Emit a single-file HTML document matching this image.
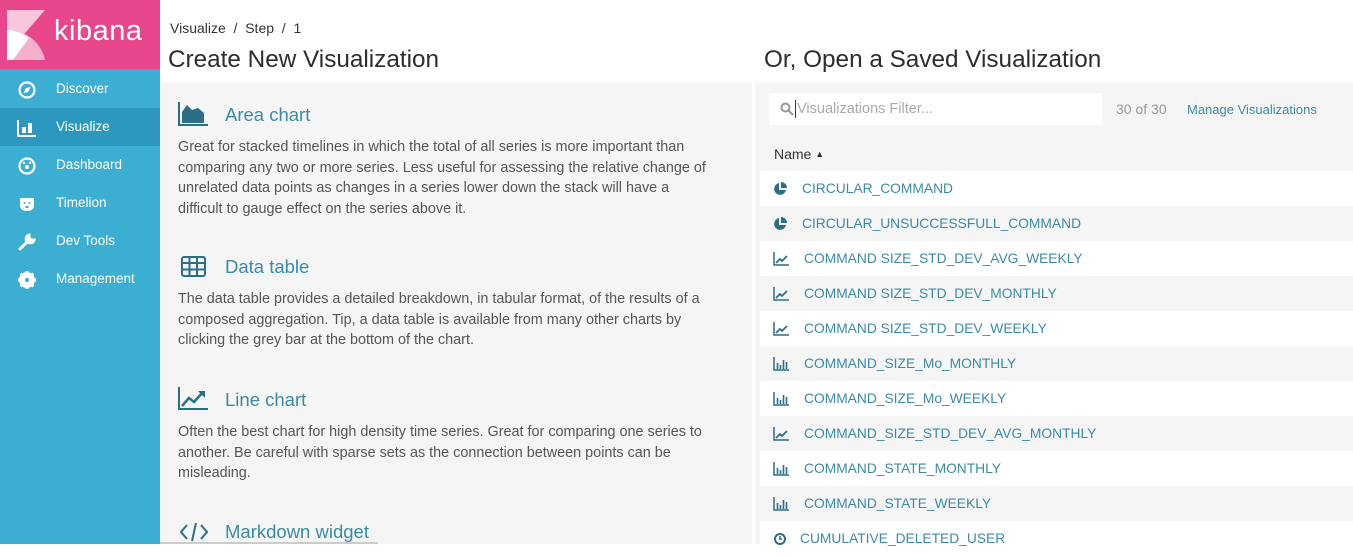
<!DOCTYPE html>
<html><head><meta charset="utf-8"><style>
*{margin:0;padding:0;box-sizing:border-box}
body{width:1353px;height:544px;overflow:hidden;background:#fff;font-family:"Liberation Sans",sans-serif;position:relative;color:#444}
#side{position:absolute;left:0;top:0;width:160px;height:544px;background:#3caed2}
#logo{height:69px;background:#e8488b;position:relative}
#logo .t{position:absolute;left:54px;top:15px;color:#fff;font-size:29px;letter-spacing:0.5px}
.nav{position:absolute;left:0;width:160px;height:38px;color:#fff;font-size:13.5px;line-height:38px;padding-left:56px}
.nav.sel{background:#2d98bf}
.nav svg{position:absolute;left:17px;top:10px}
.crumb{position:absolute;left:170px;top:20px;font-size:14px;color:#333}
h1{position:absolute;font-weight:normal;font-size:24.3px;color:#2d2d2d;top:46px}
#lp{position:absolute;left:160px;top:82px;width:592px;height:462px;background:#f5f5f5}
#rp{position:absolute;left:755px;top:82px;width:598px;height:462px;background:#f5f5f5}
.vt{position:absolute;left:65px;font-size:18.5px;color:#3a8ba8}
.vi{position:absolute;left:18px}
.ds{position:absolute;left:18px;width:550px;font-size:14.4px;line-height:20.5px;color:#555}
.row{position:absolute;left:5px;width:593px;height:35px;font-size:13.8px;color:#3a8ba8;line-height:35px}
.row.w{background:#fff}
.row svg{position:absolute;left:13px;top:11px}
.row span{position:absolute;left:44px}
</style></head><body>
<div id="side">
 <div id="logo">
  <svg width="38" height="50" style="position:absolute;left:7px;top:10px" viewBox="0 0 38 50">
   <polygon points="0,0 38,0 0,44" fill="#f9c6dc"/>
   <path d="M0,20 A38,38 0 0 1 38,50 L0,50 Z" fill="#f6b0cd"/>
   <path d="M0,20 A38,38 0 0 1 22,28 L6,50 L0,50 Z" fill="#fff"/>
  </svg>
  <div class="t">kibana</div>
 </div>
 <div class="nav" style="top:70px"><svg width="20" height="20" viewBox="0 0 20 20"><circle cx="10" cy="10" r="7.5" fill="none" stroke="#fff" stroke-width="2.2"/><polygon points="13.5,6.5 11.5,11.5 8.5,8.5" fill="#fff"/><polygon points="6.5,13.5 8.5,8.5 11.5,11.5" fill="#fff"/></svg>Discover</div>
 <div class="nav sel" style="top:108px"><svg width="20" height="20" viewBox="0 0 20 20"><path d="M1,2V18H19" fill="none" stroke="#fff" stroke-width="2"/><rect x="5" y="9" width="4" height="6" fill="#fff"/><rect x="11" y="5" width="4" height="10" fill="#fff"/></svg>Visualize</div>
 <div class="nav" style="top:146px"><svg width="20" height="20" viewBox="0 0 20 20"><circle cx="10" cy="10" r="7.5" fill="none" stroke="#fff" stroke-width="2.2"/><circle cx="10" cy="11" r="2" fill="#fff"/><circle cx="7" cy="7" r="1.2" fill="#fff"/><circle cx="13" cy="7" r="1.2" fill="#fff"/></svg>Dashboard</div>
 <div class="nav" style="top:184px"><svg width="20" height="20" viewBox="0 0 20 20"><path d="M3,4H17V11Q17,17 10,17Q3,17 3,11Z" fill="#fff"/><circle cx="7.5" cy="9" r="1" fill="#3caed2"/><circle cx="12.5" cy="9" r="1" fill="#3caed2"/><rect x="8.5" y="12" width="3" height="2" fill="#3caed2"/></svg>Timelion</div>
 <div class="nav" style="top:222px"><svg width="20" height="20" viewBox="0 0 20 20"><path d="M3,17L11,9M12,3A4,4 0 1 0 17,8L14,8L12,6Z" fill="#fff" stroke="#fff" stroke-width="3" stroke-linecap="round"/></svg>Dev Tools</div>
 <div class="nav" style="top:260px"><svg width="20" height="20" viewBox="0 0 20 20"><circle cx="10" cy="10" r="6" fill="none" stroke="#fff" stroke-width="4"/><path d="M10,1V19M1,10H19M3.6,3.6L16.4,16.4M16.4,3.6L3.6,16.4" stroke="#fff" stroke-width="3"/><circle cx="10" cy="10" r="2" fill="#3caed2"/></svg>Management</div>
</div>
<div class="crumb">Visualize&nbsp; / &nbsp;Step&nbsp; / &nbsp;1</div>
<h1 style="left:168px">Create New Visualization</h1>
<h1 style="left:764px">Or, Open a Saved Visualization</h1>
<div id="lp">
 <svg class="vi" style="top:20px" width="30" height="25" viewBox="0 0 30 25"><path d="M1,0V23H30" fill="none" stroke="#2a6f86" stroke-width="2"/><path d="M4,21V10L9,3L14,8L20,6L26,11V21Z" fill="#2a6f86"/></svg>
 <div class="vt" style="top:22px">Area chart</div>
 <div class="ds" style="top:55px;width:535px">Great for stacked timelines in which the total of all series is more important than comparing any two or more series. Less useful for assessing the relative change of unrelated data points as changes in a series lower down the stack will have a difficult to gauge effect on the series above it.</div>
 <svg class="vi" style="top:174px;left:21px" width="25" height="21" viewBox="0 0 25 21"><rect x="1" y="1" width="23" height="19" rx="2" fill="none" stroke="#2a6f86" stroke-width="2"/><path d="M1,7H24M1,13.5H24M8.5,1V20M16,1V20" stroke="#2a6f86" stroke-width="2"/></svg>
 <div class="vt" style="top:174px">Data table</div>
 <div class="ds" style="top:207px">The data table provides a detailed breakdown, in tabular format, of the results of a composed aggregation. Tip, a data table is available from many other charts by clicking the grey bar at the bottom of the chart.</div>
 <svg class="vi" style="top:305px" width="30" height="24" viewBox="0 0 30 24"><path d="M1,0V22H30" fill="none" stroke="#2a6f86" stroke-width="2"/><path d="M4,19L11,11L16,15L25,5" fill="none" stroke="#2a6f86" stroke-width="2.5"/><path d="M20,4H27V11Z" fill="#2a6f86"/></svg>
 <div class="vt" style="top:307px">Line chart</div>
 <div class="ds" style="top:340px">Often the best chart for high density time series. Great for comparing one series to another. Be careful with sparse sets as the connection between points can be misleading.</div>
 <svg class="vi" style="top:440px;left:20px" width="28" height="20" viewBox="0 0 28 20"><path d="M7,3L1,10L7,17M21,3L27,10L21,17M16,1L12,19" fill="none" stroke="#2a6f86" stroke-width="2"/></svg>
 <div class="vt" style="top:439px">Markdown widget</div>
</div>
<div id="rp">
 <div style="position:absolute;left:14px;top:11px;width:333px;height:32px;background:#fff;border-radius:3px">
  <svg style="position:absolute;left:11px;top:9px" width="14" height="14" viewBox="0 0 14 14"><circle cx="5.5" cy="5.5" r="4" fill="none" stroke="#999" stroke-width="2"/><path d="M8.5,8.5L13,13" stroke="#999" stroke-width="2.2"/></svg>
  <div style="position:absolute;left:26px;top:7px;width:1px;height:18px;background:#333"></div>
  <div style="position:absolute;left:28px;top:8px;font-size:14.5px;color:#aaa">Visualizations Filter...</div>
 </div>
 <div style="position:absolute;left:361px;top:19px;font-size:14px;color:#999">30 of 30</div>
 <div style="position:absolute;left:432px;top:20px;font-size:13px;color:#3a8ba8">Manage Visualizations</div>
 <div style="position:absolute;left:19px;top:64px;font-size:14px;color:#333">Name <span style="font-size:9px;vertical-align:2px">&#9650;</span></div>
</div>
<div style="position:absolute;left:755px;top:0;width:598px;height:544px">
 <div class="row w" style="top:171px"><svg width="14" height="14" viewBox="0 0 14 14"><path d="M6,1A6,6 0 1 0 13,8H6Z" fill="#2a6f86"/><path d="M8,0A6,6 0 0 1 14,6H8Z" fill="#2a6f86"/></svg><span style="left:42px">CIRCULAR_COMMAND</span></div>
 <div class="row" style="top:206px"><svg width="14" height="14" viewBox="0 0 14 14"><path d="M6,1A6,6 0 1 0 13,8H6Z" fill="#2a6f86"/><path d="M8,0A6,6 0 0 1 14,6H8Z" fill="#2a6f86"/></svg><span style="left:42px">CIRCULAR_UNSUCCESSFULL_COMMAND</span></div>
 <div class="row w" style="top:241px"><svg width="16" height="14" viewBox="0 0 16 14"><path d="M1,0V13H16" fill="none" stroke="#2a6f86" stroke-width="1.5"/><path d="M3,11L7,7L9,9L14,4" fill="none" stroke="#2a6f86" stroke-width="1.8"/></svg><span>COMMAND SIZE_STD_DEV_AVG_WEEKLY</span></div>
 <div class="row" style="top:276px"><svg width="16" height="14" viewBox="0 0 16 14"><path d="M1,0V13H16" fill="none" stroke="#2a6f86" stroke-width="1.5"/><path d="M3,11L7,7L9,9L14,4" fill="none" stroke="#2a6f86" stroke-width="1.8"/></svg><span>COMMAND SIZE_STD_DEV_MONTHLY</span></div>
 <div class="row w" style="top:311px"><svg width="16" height="14" viewBox="0 0 16 14"><path d="M1,0V13H16" fill="none" stroke="#2a6f86" stroke-width="1.5"/><path d="M3,11L7,7L9,9L14,4" fill="none" stroke="#2a6f86" stroke-width="1.8"/></svg><span>COMMAND SIZE_STD_DEV_WEEKLY</span></div>
 <div class="row" style="top:346px"><svg width="16" height="14" viewBox="0 0 16 14"><path d="M1,0V13H16" fill="none" stroke="#2a6f86" stroke-width="1.5"/><path d="M4.5,6V12M7.5,8V12M10.5,3V12M13.5,5V12" stroke="#2a6f86" stroke-width="1.6"/></svg><span>COMMAND_SIZE_Mo_MONTHLY</span></div>
 <div class="row w" style="top:381px"><svg width="16" height="14" viewBox="0 0 16 14"><path d="M1,0V13H16" fill="none" stroke="#2a6f86" stroke-width="1.5"/><path d="M4.5,6V12M7.5,8V12M10.5,3V12M13.5,5V12" stroke="#2a6f86" stroke-width="1.6"/></svg><span>COMMAND_SIZE_Mo_WEEKLY</span></div>
 <div class="row" style="top:416px"><svg width="16" height="14" viewBox="0 0 16 14"><path d="M1,0V13H16" fill="none" stroke="#2a6f86" stroke-width="1.5"/><path d="M3,11L7,7L9,9L14,4" fill="none" stroke="#2a6f86" stroke-width="1.8"/></svg><span>COMMAND_SIZE_STD_DEV_AVG_MONTHLY</span></div>
 <div class="row w" style="top:451px"><svg width="16" height="14" viewBox="0 0 16 14"><path d="M1,0V13H16" fill="none" stroke="#2a6f86" stroke-width="1.5"/><path d="M4.5,6V12M7.5,8V12M10.5,3V12M13.5,5V12" stroke="#2a6f86" stroke-width="1.6"/></svg><span>COMMAND_STATE_MONTHLY</span></div>
 <div class="row" style="top:486px"><svg width="16" height="14" viewBox="0 0 16 14"><path d="M1,0V13H16" fill="none" stroke="#2a6f86" stroke-width="1.5"/><path d="M4.5,6V12M7.5,8V12M10.5,3V12M13.5,5V12" stroke="#2a6f86" stroke-width="1.6"/></svg><span>COMMAND_STATE_WEEKLY</span></div>
 <div class="row w" style="top:521px"><svg width="14" height="14" viewBox="0 0 14 14"><circle cx="7" cy="7" r="5" fill="none" stroke="#2a6f86" stroke-width="2"/><path d="M7,4V7H9" stroke="#2a6f86" stroke-width="1.5" fill="none"/></svg><span style="left:40px">CUMULATIVE_DELETED_USER</span></div>
</div>
<div style="position:absolute;left:160px;top:542px;width:218px;height:2px;background:#ccc"></div>
</body></html>
